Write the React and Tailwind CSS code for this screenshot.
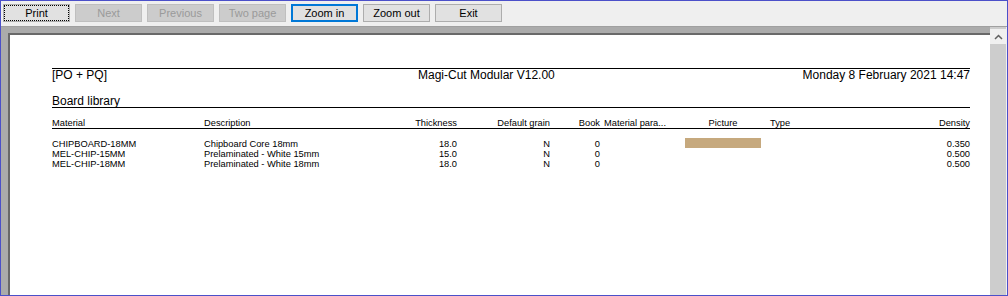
import React from "react";

// Toolbar buttons of the print preview window
const buttons = [
  { label: "Print", state: "focus" },
  { label: "Next", state: "disabled" },
  { label: "Previous", state: "disabled" },
  { label: "Two page", state: "disabled" },
  { label: "Zoom in", state: "default" },
  { label: "Zoom out", state: "normal" },
  { label: "Exit", state: "normal" },
];

const buttonStyles = {
  focus: "bg-[#e1e1e1] border border-[#adadad] text-black outline-1 outline-dotted outline-black -outline-offset-2",
  disabled: "bg-[#cccccc] border border-[#bfbfbf] text-[#9a9a9a]",
  default: "bg-[#e1e1e1] border-2 border-[#0078d7] text-black",
  normal: "bg-[#e1e1e1] border border-[#adadad] text-black",
};

// Rows of the board library report
const boards = [
  { material: "CHIPBOARD-18MM", description: "Chipboard Core 18mm", thickness: "18.0", grain: "N", book: "0", picture: true, density: "0.350" },
  { material: "MEL-CHIP-15MM", description: "Prelaminated - White 15mm", thickness: "15.0", grain: "N", book: "0", picture: false, density: "0.500" },
  { material: "MEL-CHIP-18MM", description: "Prelaminated - White 18mm", thickness: "18.0", grain: "N", book: "0", picture: false, density: "0.500" },
];

const ToolButton = ({ label, state }) => (
  <button
    className={`w-[67px] h-[18px] flex items-center justify-center text-[11px] leading-none ${buttonStyles[state]}`}
  >
    {label}
  </button>
);

const Row = ({ cells, className }) => (
  <div className={`flex h-[10px] leading-[10px] ${className || ""}`}>
    <div className="w-[152px]">{cells.material}</div>
    <div className="w-[190px]">{cells.description}</div>
    <div className="w-[63px] text-right">{cells.thickness}</div>
    <div className="w-[93px] text-right">{cells.grain}</div>
    <div className="w-[50px] text-right">{cells.book}</div>
    <div className="w-[85px] pl-[4px] whitespace-nowrap">{cells.params}</div>
    <div className="w-[76px] flex justify-center">{cells.picture}</div>
    <div className="w-[60px] pl-[9px]">{cells.type}</div>
    <div className="flex-1 text-right">{cells.density}</div>
  </div>
);

const App = () => {
  return (
    <div
      className="w-[1008px] h-[296px] border border-[#4b50c9] bg-[#efefef] flex flex-col overflow-hidden"
      style={{ fontFamily: '"Liberation Sans", Arial, sans-serif' }}
    >
      {/* Toolbar */}
      <div className="h-[26px] shrink-0 border-b border-[#a0a0a0] flex gap-[5px] pl-[2px] pt-[3px]">
        {buttons.map((b) => (
          <ToolButton key={b.label} label={b.label} state={b.state} />
        ))}
      </div>

      {/* Preview area */}
      <div className="flex flex-1 min-h-0">
        <div className="flex-1 bg-[#ababab] pl-[7px] pt-[6px] flex min-w-0">
          <div className="flex-1 bg-white border-l-2 border-t-2 border-[#696969] pl-[42px] pt-[33px] text-black">
            <div className="w-[918px]">
              {/* Report header */}
              <div className="border-t border-black flex text-[12px] leading-[13px]">
                <div className="w-[366px]">[PO + PQ]</div>
                <div>Magi-Cut Modular V12.00</div>
                <div className="ml-auto">Monday 8 February 2021 14:47</div>
              </div>

              <div className="mt-[13px] text-[12px] leading-[12px] border-b border-black">Board library</div>

              {/* Column headers */}
              <div className="mt-[10px] text-[9.3px] border-b border-black">
                <Row
                  cells={{
                    material: "Material",
                    description: "Description",
                    thickness: "Thickness",
                    grain: "Default grain",
                    book: "Book",
                    params: "Material para...",
                    picture: "Picture",
                    type: "Type",
                    density: "Density",
                  }}
                />
              </div>

              {/* Data rows */}
              <div className="mt-[10px] text-[9.3px]">
                {boards.map((b) => (
                  <Row
                    key={b.material}
                    cells={{
                      ...b,
                      params: "",
                      type: "",
                      picture: b.picture ? <div className="w-[76px] h-[10px] -mt-[1px] bg-[#c6a97e]" /> : null,
                    }}
                  />
                ))}
              </div>
            </div>
          </div>
        </div>

        {/* Vertical scrollbar */}
        <div className="w-[17px] shrink-0 bg-[#cdcdcd] border-r border-[#f0f0f0] flex flex-col">
          <div className="h-[2px] bg-[#cdcdcd]" />
          <div className="h-[15px] bg-[#f0f0f0] flex items-center justify-center">
            <svg width="9" height="6" viewBox="0 0 9 6">
              <path d="M1 5 L4.5 1.5 L8 5" fill="none" stroke="#606060" strokeWidth="1.5" />
            </svg>
          </div>
        </div>
      </div>
    </div>
  );
};

export default App;
